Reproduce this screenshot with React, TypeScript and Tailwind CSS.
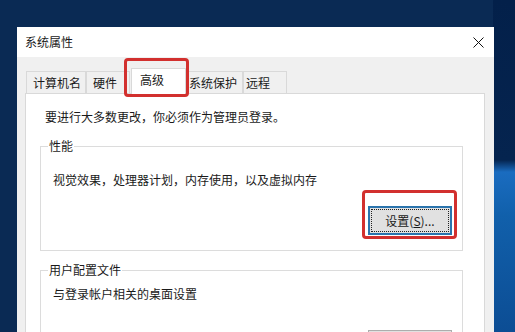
import React from 'react';

const font = { fontFamily: '"Microsoft YaHei", "Noto Sans CJK SC", "Noto Sans", sans-serif' };

function Tab({ label, width, pl }: { label: string; width: string; pl: string }) {
  return (
    <div className={`${width} ${pl} h-[22px] border border-b-0 border-[#d9d9d9] bg-[#f0f0f0] flex items-center text-[12px] leading-4 text-[#1a1a1a]`}>
      {label}
    </div>
  );
}

export default function App() {
  return (
    <div
      className="w-[515px] h-[332px] overflow-hidden bg-[#0a2a54] bg-[linear-gradient(180deg,#03204a_0px,#05244f_160px,#1a6cc0_172px,#1160ab_215px,#0c4d94_332px)] bg-no-repeat bg-right bg-size-[22px_100%] pl-[17px] pt-[27px]"
      style={font}
    >
      <div className="w-[477px] h-[305px] bg-[#f0f0f0] flex flex-col overflow-hidden">
        {/* title bar */}
        <div className="h-[30px] shrink-0 bg-white flex items-center justify-between pl-2 pr-[10px]">
          <span className="text-[12px] leading-4 text-[#1a1a1a]">系统属性</span>
          <svg width="11" height="11" viewBox="0 0 11 11">
            <path d="M0.5 0.5 L10.5 10.5 M10.5 0.5 L0.5 10.5" stroke="#111" strokeWidth="1" />
          </svg>
        </div>

        <div className="flex-1 flex flex-col pl-2 pt-[11px]">
          {/* tabs */}
          <div className="flex items-end pl-[1px] relative z-10">
            <Tab label="计算机名" width="w-[60px]" pl="pl-[6px]" />
            <Tab label="硬件" width="w-[44px]" pl="pl-[6px]" />
            <div className="relative ml-[1px] -mr-[1px] w-[55px] h-[26px] -mb-px bg-white border border-b-0 border-[#d9d9d9] flex items-center pl-[8px] pb-[4px] text-[12px] leading-4 text-[#1a1a1a]">
              高级
              <div className="absolute -left-[8px] -right-[4px] -top-[11px] -bottom-[3px] border-[3px] border-[#d2302e] rounded-[4px]" />
            </div>
            <Tab label="系统保护" width="w-[58px]" pl="pl-[3px]" />
            <Tab label="远程" width="w-[44px]" pl="pl-[2px]" />
          </div>

          {/* panel */}
          <div className="w-[460px] flex-1 bg-white border border-[#d9d9d9] pt-[15px]">
            <p className="pl-[19px] text-[12px] leading-4 text-[#1a1a1a]">要进行大多数更改，你必须作为管理员登录。</p>

            <fieldset className="ml-[14px] mt-[13px] w-[423px] border border-[#dcdcdc]">
              <legend className="ml-[7px] px-[1px] text-[12px] leading-4 text-[#1a1a1a]">性能</legend>
              <div className="pl-[12px] pt-[18px] text-[12px] leading-4 text-[#1a1a1a]">视觉效果，处理器计划，内存使用，以及虚拟内存</div>
              <div className="flex justify-end pr-[10px] pt-[18px] pb-[15px]">
                <div className="relative">
                  <button className="w-[84px] h-[29px] bg-[#e1e1e1] border-2 border-[#2a74ad] p-[1px]">
                    <span className="h-full w-full border border-dotted border-[#222] flex items-center justify-center text-[12px] leading-4 text-[#1a1a1a]">
                      设置(<span className="underline">S</span>)...
                    </span>
                  </button>
                  <div className="absolute -left-[6px] -right-[5px] -top-[16px] -bottom-[4px] border-[3px] border-[#d2302e] rounded-[4px]" />
                </div>
              </div>
            </fieldset>

            <fieldset className="ml-[14px] mt-[11px] w-[423px] border border-[#dcdcdc]">
              <legend className="ml-[7px] px-[1px] text-[12px] leading-4 text-[#1a1a1a]">用户配置文件</legend>
              <div className="pl-[12px] pt-[8px] text-[12px] leading-4 text-[#1a1a1a]">与登录帐户相关的桌面设置</div>
              <div className="flex justify-end pr-[10px] pt-[28px]">
                <div className="w-[84px] h-[29px] bg-[#e1e1e1] border border-[#adadad]" />
              </div>
            </fieldset>
          </div>
        </div>
      </div>
    </div>
  );
}
